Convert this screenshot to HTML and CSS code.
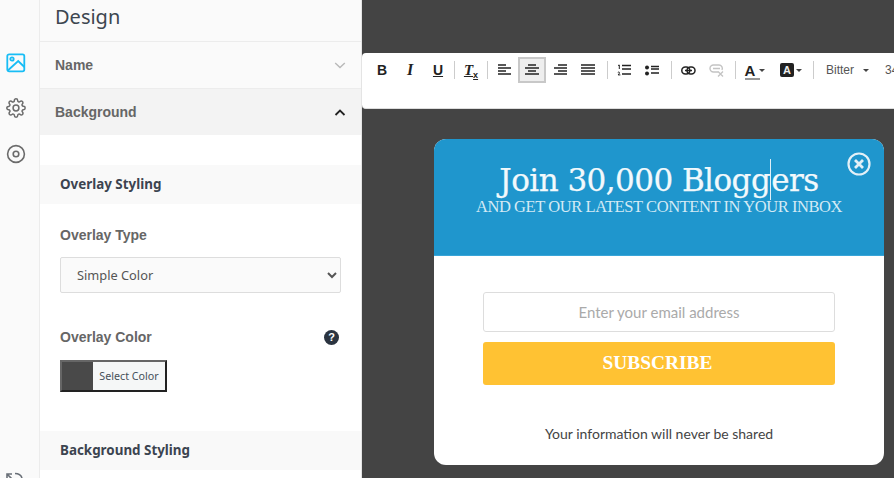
FILE: index.html
```html
<!DOCTYPE html>
<html lang="en">
<head>
<meta charset="utf-8">
<title>Design</title>
<link rel="stylesheet" href="styles.css">
</head>
<body>
<div class="app">
  <nav class="rail">
    <svg class="rail-icon" width="20" height="20" viewBox="0 0 20 20" fill="none" stroke="#18bdf5" stroke-width="1.8"><rect x="1.3" y="1.3" width="17" height="17" rx="1.8"/><circle cx="6" cy="6" r="1.7"/><path d="M1.800 17.500 12.200 8l6.200 6"/></svg>
    <svg class="rail-icon" width="20" height="20" viewBox="0 0 24 24" fill="none" stroke="#6b6b6b" stroke-width="1.800" stroke-linejoin="round"><circle cx="12" cy="12" r="3.500"/><path d="M19.4 15a1.65 1.65 0 0 0 .33 1.82l.06.06a2 2 0 0 1 0 2.83 2 2 0 0 1-2.83 0l-.06-.06a1.65 1.65 0 0 0-1.82-.33 1.65 1.65 0 0 0-1 1.51V21a2 2 0 0 1-2 2 2 2 0 0 1-2-2v-.09A1.65 1.65 0 0 0 9 19.4a1.65 1.65 0 0 0-1.82.33l-.06.06a2 2 0 0 1-2.83 0 2 2 0 0 1 0-2.83l.06-.06a1.65 1.65 0 0 0 .33-1.82 1.65 1.65 0 0 0-1.51-1H3a2 2 0 0 1-2-2 2 2 0 0 1 2-2h.09A1.65 1.65 0 0 0 4.6 9a1.65 1.65 0 0 0-.33-1.82l-.06-.06a2 2 0 0 1 0-2.83 2 2 0 0 1 2.83 0l.06.06a1.65 1.65 0 0 0 1.82.33H9a1.65 1.65 0 0 0 1-1.51V3a2 2 0 0 1 2-2 2 2 0 0 1 2 2v.09a1.65 1.65 0 0 0 1 1.51 1.65 1.65 0 0 0 1.82-.33l.06-.06a2 2 0 0 1 2.83 0 2 2 0 0 1 0 2.83l-.06.06a1.65 1.65 0 0 0-.33 1.82V9a1.65 1.65 0 0 0 1.51 1H21a2 2 0 0 1 2 2 2 2 0 0 1-2 2h-.09a1.65 1.65 0 0 0-1.51 1z"/></svg>
    <svg class="rail-icon rail-disc" width="20" height="20" viewBox="0 0 20 20" fill="none" stroke="#6b6b6b" stroke-width="1.600"><circle cx="10" cy="10" r="8.400"/><circle cx="10" cy="10" r="2.800"/></svg>
    <svg class="rail-undo" width="20" height="12" viewBox="0 0 20 12" fill="none" stroke="#6a7078" stroke-width="1.600"><path d="M2 7V2H7M2 2l5 5"/><path d="M10 1.500c3.500 0 6 1.500 7 4.500"/></svg>
  </nav>
  <aside class="panel">
    <h1 class="panel-title">Design</h1>
    <div class="accordion">
      <span>Name</span>
      <svg width="12" height="7" viewBox="0 0 12 7" fill="none" stroke="#b9b9b9" stroke-width="1.400"><path d="M1.200 1 6 5.600 10.800 1"/></svg>
    </div>
    <div class="accordion open">
      <span>Background</span>
      <svg width="12" height="7" viewBox="0 0 12 7" fill="none" stroke="#222" stroke-width="1.800"><path d="M1.500 6 6 1.600 10.500 6"/></svg>
    </div>
    <div class="panel-body">
      <h2 class="section-head first">Overlay Styling</h2>
      <div class="field type-field">
        <label class="field-label">Overlay Type</label>
        <select class="select"><option>Simple Color</option></select>
      </div>
      <div class="field color-field">
        <div class="label-row">
          <label class="field-label">Overlay Color</label>
          <span class="help">?</span>
        </div>
        <button class="color-btn"><span class="swatch"></span><span class="swatch-text">Select Color</span></button>
      </div>
      <h2 class="section-head">Background Styling</h2>
    </div>
  </aside>
  <main class="canvas">
    <div class="toolbar">
      <div class="tools">
        <span class="tool t-b">B</span>
        <span class="tool t-i">I</span>
        <span class="tool t-u">U</span>
        <i class="sep"></i>
        <span class="tool t-clear">T<small>x</small></span>
        <i class="sep"></i>
        <span class="tool"><svg width="14" height="12" viewBox="0 0 14 12"><path d="M1 1h8M1 4h13M1 7h8M1 10h13" stroke="#222" stroke-width="1.700"/></svg></span>
        <span class="tool active"><svg width="14" height="12" viewBox="0 0 14 12"><path d="M3 1h8M0 4h14M3 7h8M0 10h14" stroke="#222" stroke-width="1.700"/></svg></span>
        <span class="tool"><svg width="14" height="12" viewBox="0 0 14 12"><path d="M5 1h9M1 4h13M5 7h9M1 10h13" stroke="#222" stroke-width="1.700"/></svg></span>
        <span class="tool"><svg width="14" height="12" viewBox="0 0 14 12"><path d="M0 1h14M0 4h14M0 7h14M0 10h14" stroke="#222" stroke-width="1.700"/></svg></span>
        <i class="sep wide"></i>
        <span class="tool"><svg width="14" height="13" viewBox="0 0 14 13"><path d="M5 1.500h9M5 5h9M5 10h9" stroke="#222" stroke-width="1.500"/><path d="M1 1.500 2.300 1v4M.8 8.500c1.500-1.200 2.700.2.300 2.400h2.300" fill="none" stroke="#222"/></svg></span>
        <span class="tool"><svg width="14" height="11" viewBox="0 0 14 11"><circle cx="2" cy="2.500" r="2" fill="#222"/><circle cx="2" cy="8.500" r="2" fill="#222"/><path d="M6 1.500h8M6 4h8M6 8h8" stroke="#222" stroke-width="1.400"/></svg></span>
        <i class="sep wide"></i>
        <span class="tool"><svg width="15" height="9" viewBox="0 0 15 9" fill="none" stroke="#222" stroke-width="1.500"><rect x=".8" y=".9" width="8" height="7" rx="3.500"/><rect x="6" y=".9" width="8" height="7" rx="3.500"/><path d="M4 4.400h7"/></svg></span>
        <span class="tool"><svg width="15" height="13" viewBox="0 0 15 13" fill="none" stroke="#c4c4c4" stroke-width="1.400"><path d="M9 8H4.500a3.500 3.500 0 0 1 0-7H10a3.500 3.500 0 0 1 3 5M4 4.500h7"/><path d="M9 7.500l5 5M14 7.500l-5 5"/></svg></span>
        <i class="sep wide"></i>
        <span class="tool t-color">A<i class="underline"></i><i class="caret"></i></span>
        <span class="tool t-bgcolor"><b>A</b><i class="caret"></i></span>
        <i class="sep narrow"></i>
        <span class="tool t-font">Bitter<i class="caret"></i></span>
        <span class="tool t-size">34</span>
      </div>
    </div>
    <section class="popup">
      <header class="popup-head">
        <h2 class="popup-title">Join 30,000 Blogg<span class="cursor"></span>ers</h2>
        <p class="popup-sub">AND GET OUR LATEST CONTENT IN YOUR INBOX</p>
        <svg class="close" width="24" height="24" viewBox="0 0 24 24" fill="none" stroke="#e3f0f7"><circle cx="12" cy="12" r="10.500" stroke-width="2.200"/><path d="M8 8l8 8M16 8l-8 8" stroke-width="2.800"/></svg>
      </header>
      <div class="popup-body">
        <div class="email">Enter your email address</div>
        <div class="subscribe">SUBSCRIBE</div>
        <p class="note">Your information will never be shared</p>
      </div>
    </section>
  </main>
</div>
</body>
</html>
```

FILE: styles.css
```css
* { box-sizing: border-box; }
html, body { margin: 0; height: 100%; overflow: hidden; }
body { font-family: "Liberation Sans", Arial, sans-serif; background: #fff; }
.app { display: flex; width: 894px; height: 478px; overflow: hidden; }

.rail { position: relative; width: 40px; flex: none; background: #fafafa; border-right: 1px solid #ececec; display: flex; flex-direction: column; align-items: center; gap: 25px; padding: 53px 8px 0 0; }
.rail-icon { flex: none; }
.rail-disc { margin-top: 1px; }
.rail-undo { position: absolute; left: 5px; top: 472px; }

.panel { width: 322px; flex: none; height: 478px; overflow: hidden; border-right: 1px solid #e4e4e4; background: #fff; }
.panel-title { margin: 0; height: 42px; padding: 5px 0 0 15px; font: 400 20px/24px "Noto Sans", sans-serif; color: #3d4650; background: #fafafa; border-bottom: 1px solid #ececec; }
.accordion { display: flex; justify-content: space-between; align-items: center; height: 47px; padding: 0 15px; font-size: 14px; font-weight: 700; color: #666; background: #fafafa; border-bottom: 1px solid #ececec; }
.accordion svg { flex: none; }
.accordion.open { height: 46px; background: #f3f3f3; border-bottom: 0; }
.panel-body { padding-top: 30px; }
.section-head { margin: 0; height: 39px; padding-left: 20px; font: 700 13.400px/38px "Noto Sans", sans-serif; color: #3c4450; background: #f9f9f9; }
.field { padding: 0 20px; }
.type-field { padding-top: 22px; }
.field-label { display: block; font-size: 14px; font-weight: 700; line-height: 18px; color: #666; }
.select { display: block; width: 281px; height: 36px; margin-top: 13px; padding: 0 12px; border: 1px solid #ddd; border-radius: 2px; background: #fafafa; color: #555; font: 12.800px "Noto Sans", sans-serif; }
.color-field { margin-top: 35px; }
.label-row { display: flex; justify-content: space-between; align-items: center; padding-right: 2px; }
.help { width: 15px; height: 15px; border-radius: 50%; background: #2b3440; color: #fff; font: 700 11px/15px "Liberation Sans", sans-serif; text-align: center; }
.color-btn { display: flex; width: 107px; height: 32px; margin: 14px 0 0; padding: 0; border: 2px solid; border-color: #666 #222 #222 #666; background: #f5f7f7; font: inherit; }
.swatch { width: 31px; height: 100%; background: #494949; }
.swatch-text { flex: 1; font: 10.700px/28px "Noto Sans", sans-serif; color: #46505a; text-align: center; }
.section-head:last-child { margin-top: 39px; }

.canvas { flex: 1; min-width: 0; background: #444; padding-top: 53px; overflow: hidden; }
.toolbar { height: 56px; background: #fff; border-radius: 4px 0 0 4px; border-bottom: 1px solid #ddd; padding-top: 4px; overflow: hidden; }
.tools { display: flex; align-items: center; height: 26px; white-space: nowrap; }
.tool { position: relative; display: flex; align-items: center; justify-content: center; flex: none; width: 28px; height: 26px; font-size: 14px; color: #222; }
.tools > .tool:first-child { margin-left: 6px; }
.t-b { font-weight: 700; }
.t-i { font-weight: 700; font-style: italic; font-family: "Liberation Serif", serif; font-size: 16px; }
.t-u { font-weight: 700; text-decoration: underline; }
.t-clear { font: italic 700 15px "Liberation Serif", serif; text-decoration: underline; }
.t-clear small { font: 700 9px "Liberation Sans", sans-serif; margin-top: 9px; }
.active { background: #eee; box-shadow: inset 0 0 0 2px #c8c8c8; }
.sep { flex: none; width: 1px; height: 18px; margin: 0 2px; background: #ccc; }
.sep.wide { margin-left: 5px; }
.sep.narrow { margin-left: 3px; }
.caret { display: inline-block; margin-left: 2px; border: 3px solid transparent; border-top-color: #444; border-bottom: 0; }
.t-color { font-weight: 700; width: 34px; font-size: 15px; }
.t-color .underline { position: absolute; left: 7px; top: 21px; width: 15px; height: 2px; background: #999; }
.t-color .caret { margin-left: 4px; }
.t-bgcolor { width: 38px; }
.t-bgcolor b { width: 14px; height: 14px; border-radius: 2px; background: #222; color: #eee; font-size: 11px; line-height: 14px; text-align: center; }
.t-font { width: 62px; font-size: 12px; color: #555; justify-content: flex-start; padding-left: 10px; }
.t-font .caret { margin-left: 9px; }
.t-size { width: 24px; font-size: 12px; color: #555; justify-content: flex-start; padding-left: 7px; }

.popup { width: 450px; height: 326px; margin: 30px 0 0 72px; border-radius: 12px; overflow: hidden; background: #fff; }
.popup-head { position: relative; height: 117px; padding-top: 20px; background: #1f96cd; text-align: center; color: #f2f9fc; border-bottom: 1px solid #39a5d8; }
.popup-title { margin: 0; font: 400 31px/38px "DejaVu Serif", serif; letter-spacing: -.550px; -webkit-text-stroke: .25px #f2f9fc; }
.cursor { display: inline-block; width: 1px; height: 41px; margin: 0 0 -9px; background: #dfeef7; }
.popup-sub { margin: -1px 0 0; font: 400 16.500px/18px "Liberation Serif", serif; color: #d4eaf5; letter-spacing: -.420px; }
.close { position: absolute; right: 13px; top: 13px; }
.popup-body { padding: 36px 49px 0; }
.email { height: 40px; border: 1px solid #ddd; border-radius: 3px; font: 15px/38px Lato, sans-serif; text-align: center; color: #aaa; }
.subscribe { height: 43px; margin-top: 10px; border-radius: 3px; background: #ffc233; font: 700 19.400px/41px "Liberation Serif", serif; color: #fff; text-align: center; padding-right: 3px; }
.note { margin: 40px 0 0; font: 14px/18px Lato, sans-serif; color: #444; text-align: center; }
```
